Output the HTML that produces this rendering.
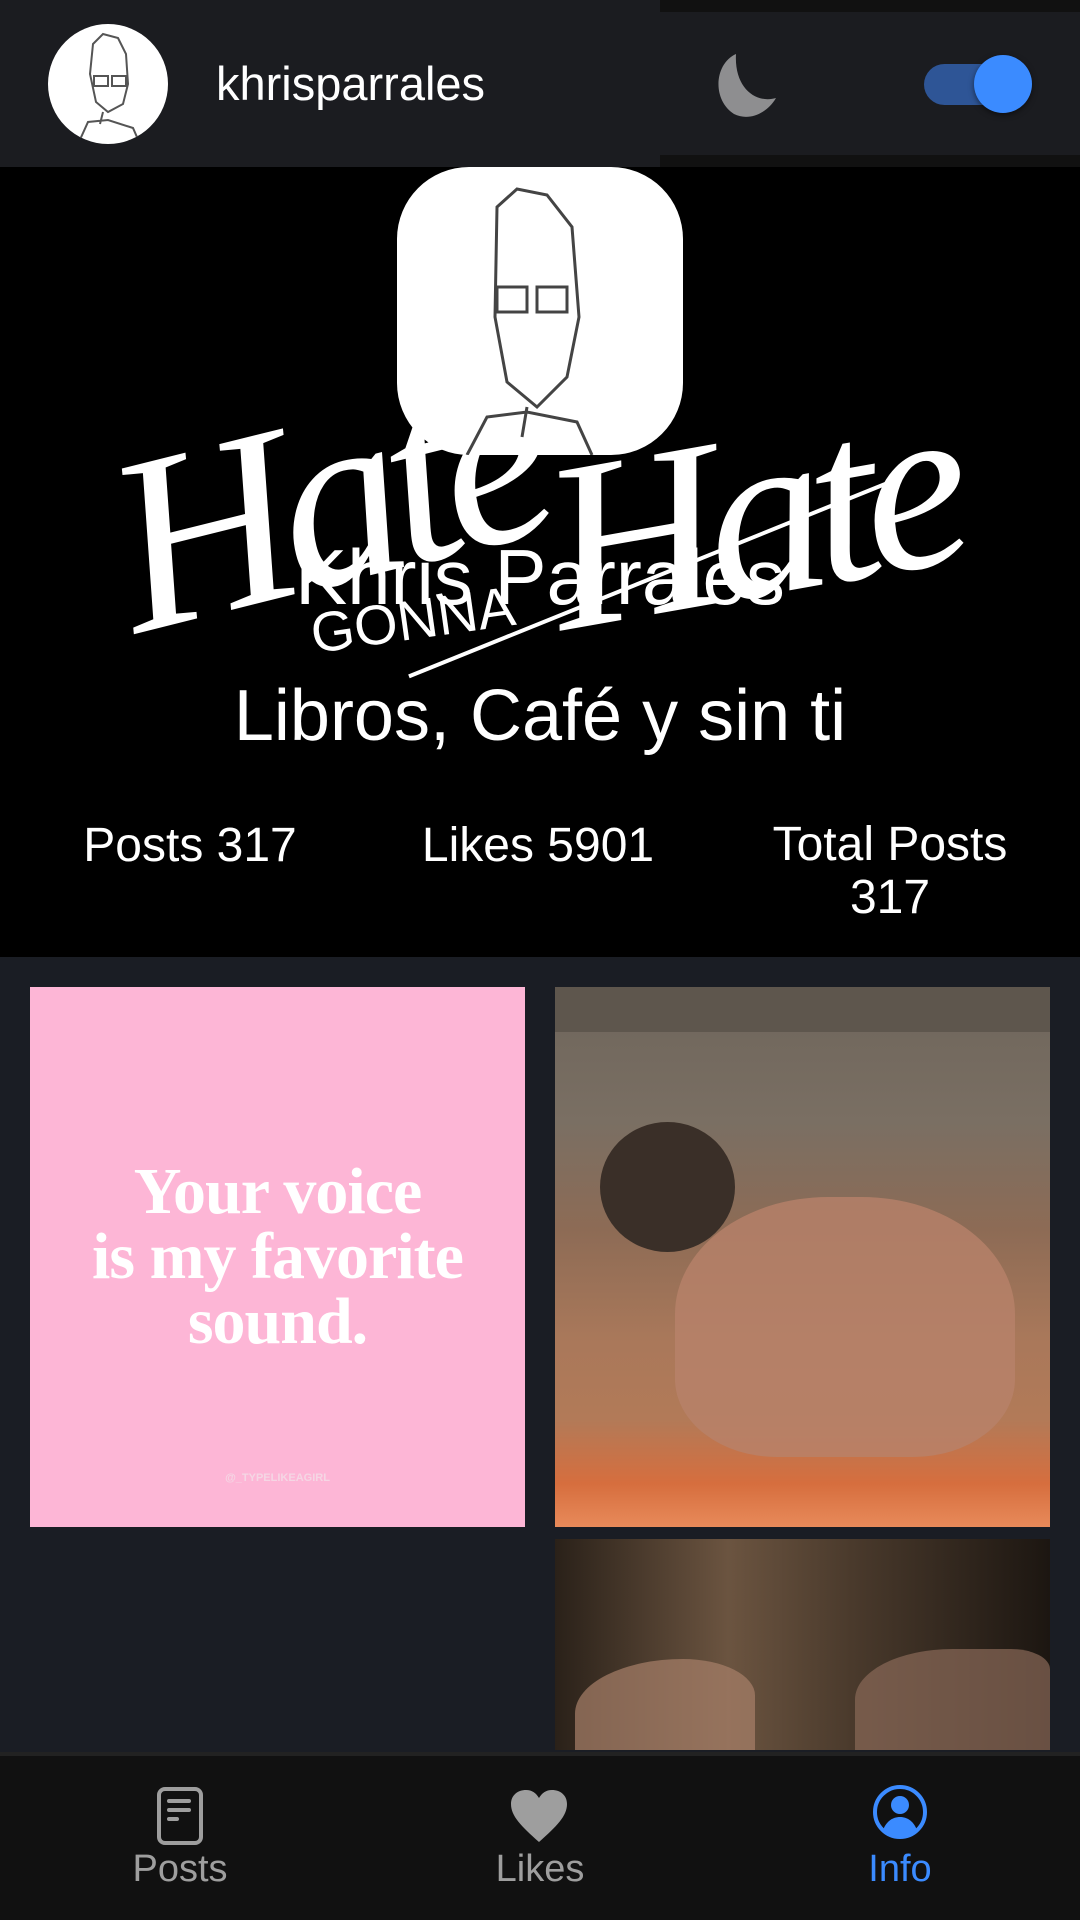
<!DOCTYPE html>
<html><head><meta charset="utf-8"><style>
*{margin:0;padding:0;box-sizing:border-box}
body{width:1080px;height:1920px;overflow:hidden;background:#1a1d24;font-family:"Liberation Sans",sans-serif;position:relative}
.abs{position:absolute}
</style></head><body>
<!-- header -->
<div class="abs" style="left:0;top:0;width:1080px;height:167px;background:#1b1c20"></div>
<div class="abs" style="left:660px;top:0;width:420px;height:12px;background:#111"></div>
<div class="abs" style="left:660px;top:155px;width:420px;height:12px;background:#111"></div>
<div class="abs" style="left:48px;top:24px;width:120px;height:120px;border-radius:50%;background:#fff;overflow:hidden">
<svg width="120" height="120" viewBox="0 0 120 120" fill="none" stroke="#555" stroke-width="2"><path d="M45 20 L55 10 L70 14 L78 30 L80 60 L75 80 L60 88 L48 78 L42 50 Z"/><path d="M46 52 h14 v10 h-14z M64 52 h14 v10 h-14z"/><path d="M55 88 L52 100 M30 120 L40 98 L60 96 L85 104 L92 120"/></svg></div>
<div class="abs" style="left:216px;top:56px;font-size:47px;color:#fff">khrisparrales</div>
<svg class="abs" style="left:710px;top:52px" width="70" height="66" viewBox="0 0 70 66"><path d="M26 2 C4 12 2 48 24 62 C40 70 58 60 66 46 C46 52 24 36 26 2 Z" fill="#8e8e90"/></svg>
<div class="abs" style="left:924px;top:64px;width:84px;height:41px;border-radius:21px;background:#2e5596"></div>
<div class="abs" style="left:974px;top:55px;width:58px;height:58px;border-radius:50%;background:#3b8bff;box-shadow:0 2px 6px rgba(0,0,0,.5)"></div>
<!-- cover -->
<div class="abs" style="left:0;top:167px;width:1080px;height:790px;background:#000;overflow:hidden">
<div class="abs" style="left:110px;top:190px;font-family:'Liberation Serif',serif;font-style:italic;font-size:250px;color:#fff;transform:rotate(-14deg);letter-spacing:-14px">Hate</div>
<div class="abs" style="left:545px;top:210px;font-family:'Liberation Serif',serif;font-style:italic;font-size:240px;color:#fff;transform:rotate(-10deg);letter-spacing:-14px">Hate</div>
<div class="abs" style="left:310px;top:420px;font-size:56px;color:#fff;transform:rotate(-8deg)">GONNA</div>
<div class="abs" style="left:390px;top:410px;width:520px;height:4px;background:#fff;transform:rotate(-22deg)"></div>
</div>
<div class="abs" style="left:397px;top:167px;width:286px;height:288px;border-radius:72px;background:#fff;overflow:hidden">
<svg width="286" height="288" viewBox="0 0 286 288" fill="none" stroke="#444" stroke-width="3"><path d="M100 40 L120 22 L150 28 L175 60 L182 150 L170 210 L140 240 L110 215 L98 150 Z"/><path d="M100 120 h30 v25 h-30z M140 120 h30 v25 h-30z"/><path d="M130 240 L125 270 M70 288 L90 250 L130 245 L180 255 L195 288"/></svg></div>
<div class="abs" style="left:0;top:532px;width:1080px;text-align:center;font-size:78px;color:#fff">Khris Parrales</div>
<div class="abs" style="left:0;top:675px;width:1080px;text-align:center;font-size:72px;color:#fff">Libros, Café y sin ti</div>
<div class="abs" style="left:40px;top:818px;width:300px;text-align:center;font-size:48px;color:#fff">Posts 317</div>
<div class="abs" style="left:388px;top:818px;width:300px;text-align:center;font-size:48px;color:#fff">Likes 5901</div>
<div class="abs" style="left:730px;top:818px;width:320px;text-align:center;font-size:48px;line-height:53px;color:#fff">Total Posts<br>317</div>
<!-- grid -->
<div class="abs" style="left:30px;top:987px;width:495px;height:540px;background:#fdb6d6;text-align:center;color:#fff;font-family:'Liberation Serif',serif;font-weight:bold">
<div style="margin-top:172px;font-size:66px;line-height:65px;letter-spacing:-1px">Your voice<br>is my favorite<br>sound.</div>
<div style="margin-top:118px;font-family:'Liberation Sans',sans-serif;font-size:11px;color:#f5d6e4">@_TYPELIKEAGIRL</div></div>
<div class="abs" style="left:555px;top:987px;width:495px;height:540px;background:linear-gradient(180deg,#6e655b 0%,#7a6f63 25%,#8d6b55 45%,#a9785a 65%,#b27a58 80%,#d66e3e 92%,#e88a5a 100%)">
<div class="abs" style="left:0;top:0;width:495px;height:45px;background:#5e564d"></div>
<div class="abs" style="left:45px;top:135px;width:135px;height:130px;border-radius:50%;background:#3a2f28"></div>
<div class="abs" style="left:120px;top:210px;width:340px;height:260px;border-radius:45% 45% 30% 30%;background:#b8826a;opacity:.8"></div>
</div>
<div class="abs" style="left:555px;top:1539px;width:495px;height:211px;background:linear-gradient(90deg,#2a2119,#6b5440 35%,#4a3a2c 60%,#1c1611)">
<div class="abs" style="left:20px;top:120px;width:180px;height:91px;border-radius:60% 40% 0 0;background:#a8806a;opacity:.7"></div>
<div class="abs" style="left:300px;top:110px;width:195px;height:101px;border-radius:50% 20% 0 0;background:#8a6a58;opacity:.7"></div>
</div>
<!-- nav -->
<div class="abs" style="left:0;top:1752px;width:1080px;height:168px;background:#111;border-top:4px solid #222"></div>
<svg class="abs" style="left:157px;top:1787px" width="46" height="58" viewBox="0 0 46 58" fill="none" stroke="#9e9e9e" stroke-width="4"><rect x="2" y="2" width="42" height="54" rx="6"/><path d="M12 14h20M12 23h20M12 32h8" stroke-linecap="round"/></svg>
<svg class="abs" style="left:511px;top:1790px" width="56" height="52" viewBox="0 0 56 52"><path d="M28 52 C10 36 0 26 0 14 C0 5 7 0 15 0 C21 0 25 3 28 8 C31 3 35 0 41 0 C49 0 56 5 56 14 C56 26 46 36 28 52Z" fill="#9e9e9e"/></svg>
<svg class="abs" style="left:872px;top:1784px" width="56" height="56" viewBox="0 0 56 56"><circle cx="28" cy="28" r="25" fill="none" stroke="#3b8bff" stroke-width="4"/><circle cx="28" cy="21" r="9" fill="#3b8bff"/><path d="M11 46 C15 36 22 33 28 33 C34 33 41 36 45 46 C40 51 34 53 28 53 C22 53 16 51 11 46Z" fill="#3b8bff"/></svg>
<div class="abs" style="left:80px;top:1848px;width:200px;text-align:center;font-size:38px;color:#9e9e9e">Posts</div>
<div class="abs" style="left:440px;top:1848px;width:200px;text-align:center;font-size:38px;color:#9e9e9e">Likes</div>
<div class="abs" style="left:800px;top:1848px;width:200px;text-align:center;font-size:38px;color:#3b8bff">Info</div>
</body></html>
